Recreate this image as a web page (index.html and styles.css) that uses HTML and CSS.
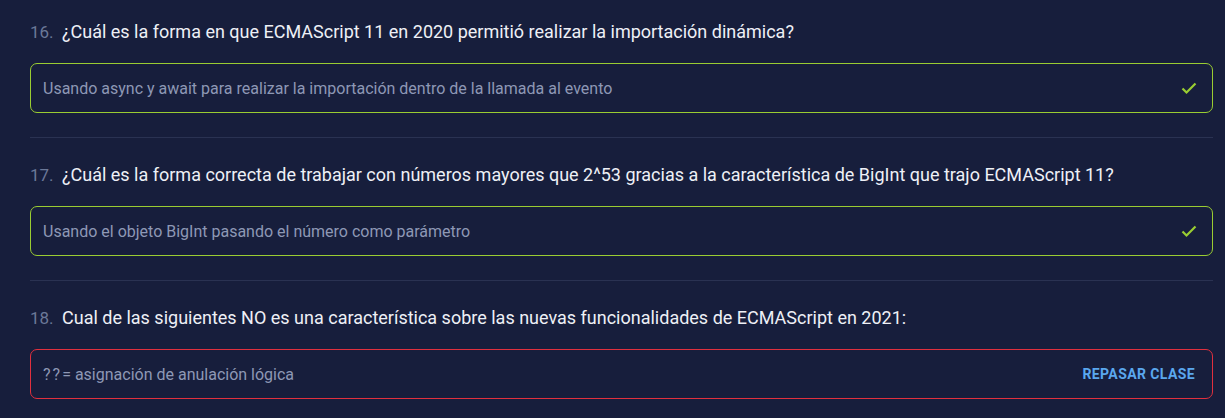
FILE: index.html
```html
<!DOCTYPE html>
<html lang="es">
<head>
<meta charset="utf-8">
<link rel="stylesheet" href="styles.css">
</head>
<body>
<div class="quiz">
  <div class="item">
    <div class="question"><span class="num">16.</span><span class="text">¿Cuál es la forma en que ECMAScript 11 en 2020 permitió realizar la importación dinámica?</span></div>
    <div class="answer correct">
      <span class="answer-text">Usando async y await para realizar la importación dentro de la llamada al evento</span>
      <svg class="check" width="16" height="14" viewBox="0 0 16 14"><path d="M1.5 7.5 L5.5 11.5 L14.5 2.5" fill="none" stroke="#9acd32" stroke-width="2.2"/></svg>
    </div>
  </div>
  <div class="item">
    <div class="question"><span class="num">17.</span><span class="text">¿Cuál es la forma correcta de trabajar con números mayores que 2^53 gracias a la característica de BigInt que trajo ECMAScript 11?</span></div>
    <div class="answer correct">
      <span class="answer-text">Usando el objeto BigInt pasando el número como parámetro</span>
      <svg class="check" width="16" height="14" viewBox="0 0 16 14"><path d="M1.5 7.5 L5.5 11.5 L14.5 2.5" fill="none" stroke="#9acd32" stroke-width="2.2"/></svg>
    </div>
  </div>
  <div class="item last">
    <div class="question"><span class="num">18.</span><span class="text">Cual de las siguientes NO es una característica sobre las nuevas funcionalidades de ECMAScript en 2021:</span></div>
    <div class="answer wrong">
      <span class="answer-text"><span class="op">??</span>= asignación de anulación lógica</span>
      <span class="review">Repasar clase</span>
    </div>
  </div>
</div>
</body>
</html>
```
FILE: styles.css
```css
html, body {
  margin: 0;
  padding: 0;
  background: #171e3c;
}
body {
  font-family: Roboto, "Liberation Sans", sans-serif;
  width: 1225px;
  height: 418px;
  overflow: hidden;
}
.quiz {
  padding: 20px 12px 0 30px;
}
.item {
  border-bottom: 1px solid #2a3252;
  padding-bottom: 24px;
  margin-bottom: 25px;
}
.item.last {
  border-bottom: none;
  padding-bottom: 0;
  margin-bottom: 0;
}
.question {
  display: flex;
  align-items: baseline;
  font-size: 18px;
  line-height: 24px;
  color: #eef0f6;
  margin-bottom: 19px;
}
.num {
  color: #6b7898;
  width: 32px;
  font-size: 17px;
}
.answer {
  box-sizing: border-box;
  height: 50px;
  border-radius: 7px;
  border: 1px solid #9acd32;
  display: flex;
  align-items: center;
  justify-content: space-between;
  padding: 0 15px 0 12px;
}
.answer.wrong {
  border-color: #e0303e;
  padding-right: 17px;
}
.answer-text {
  font-size: 16px;
  color: #8e98b5;
}
.op {
  letter-spacing: 2px;
}
.check {
  display: block;
}
.review {
  font-size: 14px;
  font-weight: 700;
  text-transform: uppercase;
  letter-spacing: 0.4px;
  color: #5aa7ee;
}
```
